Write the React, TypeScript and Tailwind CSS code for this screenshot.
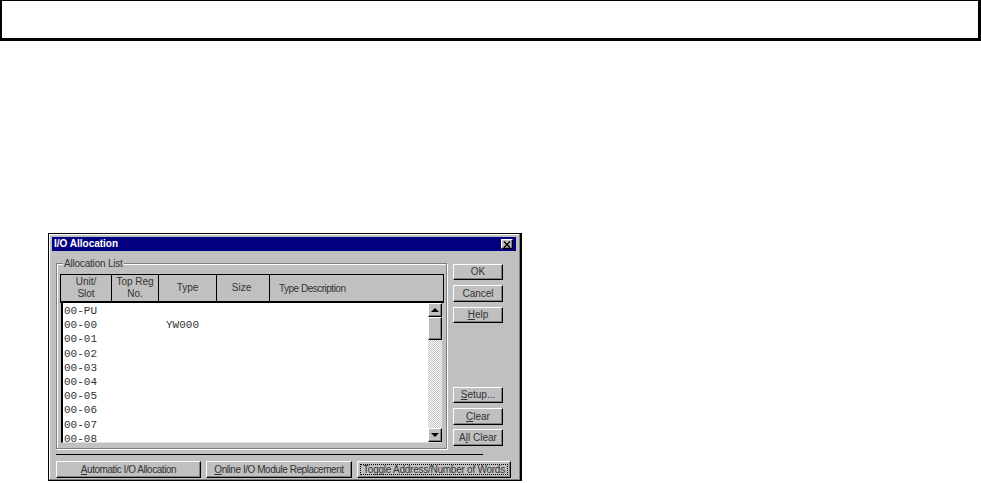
import React from 'react';

const rows = ['00-PU', '00-00', '00-01', '00-02', '00-03', '00-04', '00-05', '00-06', '00-07', '00-08'];

const columns = [
  { label: 'Unit/\nSlot', width: 'w-[51px]' },
  { label: 'Top Reg\nNo.', width: 'w-[47px]' },
  { label: 'Type', width: 'w-[58px]' },
  { label: 'Size', width: 'w-[53px] pr-[3px]' },
];

const raised =
  'border border-t-white border-l-white border-r-black border-b-black shadow-[inset_-1px_-1px_0_#808080]';

const SideButton = ({ children, h = 'h-[16px]' }: { children: React.ReactNode; h?: string }) => (
  <div className={`${raised} ${h} w-[50px] bg-[#c0c0c0] flex items-center justify-center text-[10px] leading-none text-[#333] whitespace-nowrap`}>
    {children}
  </div>
);

const BottomButton = ({
  children,
  width,
  focused,
}: {
  children: React.ReactNode;
  width: string;
  focused?: boolean;
}) => (
  <div className={`${raised} ${width} h-[17px] bg-[#c0c0c0] flex items-center justify-center text-[10px] tracking-[-0.45px] leading-none text-[#333] p-[2px] whitespace-nowrap`}>
    <div className={`w-full h-full flex items-center justify-center ${focused ? 'border border-dotted border-black tracking-[-0.25px]' : ''}`}>
      {children}
    </div>
  </div>
);

const App: React.FC = () => {
  return (
    <div className="w-[981px] h-[483px] bg-white overflow-hidden font-['Liberation_Sans',sans-serif]">
      {/* Top box */}
      <div className="h-[41px] border-t border-l-2 border-r-[3px] border-b-[3px] border-black bg-white" />

      {/* Dialog */}
      <div className="ml-[48px] mt-[192px] w-[474px] h-[248px] border border-r-2 border-black bg-[#c0c0c0] p-[2px] flex flex-col shadow-[inset_-1px_-1px_0_#808080,inset_1px_1px_0_#fff]">
        <div className="h-[14px] mt-[1px] ml-[1px] mr-[2px] bg-[#000080] flex items-center justify-between pl-[2px] pr-[3px]">
          <span className="text-white font-bold text-[10px] leading-none">I/O Allocation</span>
          <div className={`${raised} w-[12px] h-[10px] bg-[#c0c0c0] flex items-center justify-center`}>
            <svg width="8" height="7" viewBox="0 0 8 7">
              <path d="M1 0.5L7 6.5M7 0.5L1 6.5" stroke="#000" strokeWidth="1.4" fill="none" />
            </svg>
          </div>
        </div>

        <div className="flex pl-[5px] pt-[12px]">
          {/* Group box */}
          <div className="relative w-[391px] h-[186px] border border-[#808080] shadow-[inset_1px_1px_0_#fff,1px_1px_0_#fff] pt-[10px] pl-[3px]">
            <span className="absolute left-[6px] top-[-6px] bg-[#c0c0c0] px-[1px] text-[10px] tracking-[-0.2px] leading-[12px] text-[#333]">
              Allocation List
            </span>
            <div className="w-[384px] h-[29px] flex border border-black border-b-2 bg-[#c0c0c0]">
              {columns.map((c) => (
                <div
                  key={c.label}
                  className={`${c.width} shrink-0 border-r border-black flex items-center justify-center text-center whitespace-pre-line text-[10px] leading-[12px] text-[#333]`}
                >
                  {c.label}
                </div>
              ))}
              <div className="flex-1 flex items-center pl-[9px] text-[10px] tracking-[-0.5px] text-[#333]">Type Description</div>
            </div>
            <div className="flex w-[381px] h-[140px] ml-[1px] border-l-2 border-black border-b border-b-[#dfdfdf] bg-white">
              <div className="flex-1 overflow-hidden pt-[1px] pl-[1px] font-['Liberation_Mono',monospace] text-[11px] leading-[14.2px] text-[#333]">
                {rows.map((r) => (
                  <div key={r} className="flex h-[14.2px]">
                    <span className="w-[102px]">{r}</span>
                    {r === '00-00' && <span>YW000</span>}
                  </div>
                ))}
              </div>
              <div className="w-[14px] h-[139px] flex flex-col bg-[repeating-conic-gradient(#c0c0c0_0_25%,#ffffff_0_50%)] bg-[length:2px_2px]">
                <div className={`${raised} h-[14px] bg-[#c0c0c0] flex items-center justify-center`}>
                  <div className="w-0 h-0 border-x-[4px] border-x-transparent border-b-[4px] border-b-black" />
                </div>
                <div className={`${raised} h-[23px] bg-[#c0c0c0]`} />
                <div className="flex-1" />
                <div className={`${raised} h-[14px] bg-[#c0c0c0] flex items-center justify-center`}>
                  <div className="w-0 h-0 border-x-[4px] border-x-transparent border-t-[4px] border-t-black" />
                </div>
              </div>
            </div>
          </div>

          {/* Side buttons */}
          <div className="ml-[6px] pt-[1px] flex flex-col">
            <SideButton>OK</SideButton>
            <div className="h-[5px]" />
            <SideButton h="h-[17px]">Cancel</SideButton>
            <div className="h-[5px]" />
            <SideButton>
              <span><u>H</u>elp</span>
            </SideButton>
            <div className="h-[64px]" />
            <SideButton>
              <span><u>S</u>etup...</span>
            </SideButton>
            <div className="h-[5px]" />
            <SideButton h="h-[17px]">
              <span><u>C</u>lear</span>
            </SideButton>
            <div className="h-[4px]" />
            <SideButton h="h-[17px]">
              <span>A<u>l</u>l Clear</span>
            </SideButton>
          </div>
        </div>

        <div className="ml-[5px] mt-[5px] w-[427px] h-px bg-black" />

        <div className="flex ml-[5px] mt-[6px] gap-[5px]">
          <BottomButton width="w-[145px]">
            <span><u>A</u>utomatic I/O Allocation</span>
          </BottomButton>
          <BottomButton width="w-[146px]">
            <span><u>O</u>nline I/O Module Replacement</span>
          </BottomButton>
          <BottomButton width="w-[154px]" focused>
            Toggle Address/Number of Words
          </BottomButton>
        </div>
      </div>
    </div>
  );
};

export default App;
